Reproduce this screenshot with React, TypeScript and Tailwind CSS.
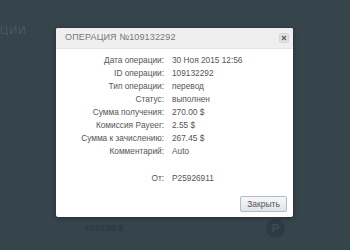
import React from "react";

const rows: [string, string][] = [
  ["Дата операции:", "30 Ноя 2015 12:56"],
  ["ID операции:", "109132292"],
  ["Тип операции:", "перевод"],
  ["Статус:", "выполнен"],
  ["Сумма получения:", "270.00 $"],
  ["Комиссия Payeer:", "2.55 $"],
  ["Сумма к зачислению:", "267.45 $"],
  ["Комментарий:", "Auto"],
];

export default function App() {
  return (
    <div
      className="relative w-[350px] h-[250px] overflow-hidden bg-[#36444b]"
      style={{ fontFamily: '"Liberation Sans", Arial, sans-serif' }}
    >
      {/* background page (dimmed) */}
      <div className="flex flex-col h-full">
        <div className="h-[24px]" />
        <div className="text-[11px] leading-[12px] tracking-[1px] text-[#4b5960]">ЦИИ</div>
        <div className="flex-1" />
        <div className="flex items-center h-[22px] mb-[11px] pl-[85px] pr-[65px]">
          <span className="text-[8.5px] text-[#2b383e] font-bold">+270.00 $</span>
          <div className="flex-1" />
          <div className="w-[19px] h-[19px] rounded-full bg-[#2d3b42] flex items-center justify-center text-[11px] font-bold text-[#3e4d55]">P</div>
        </div>
      </div>

      {/* modal */}
      <div className="absolute left-[56px] top-[28px] w-[237px] h-[189px] bg-white rounded-[2px] shadow-[0_1px_4px_rgba(0,0,0,0.35)] flex flex-col overflow-hidden">
        <div className="h-[21px] bg-[#efefef] border-b border-[#e4e4e4] flex items-center pl-[9px] pr-[4px]">
          <span className="text-[9px] tracking-[0.15px] text-[#777]">ОПЕРАЦИЯ №109132292</span>
          <div className="flex-1" />
          <div className="w-[10px] h-[10px] rounded-[2px] bg-[#e2e2e2] border border-[#d6d6d6] flex items-center justify-center">
            <svg width="6" height="6" viewBox="0 0 6 6">
              <path d="M1 1L5 5M5 1L1 5" stroke="#666" strokeWidth="1.4" />
            </svg>
          </div>
        </div>
        <div className="pt-[5px] grid grid-cols-[108px_1fr] gap-x-[8px] text-[8.3px] leading-[13px] text-[#555]">
          {rows.map(([l, v]) => (
            <React.Fragment key={l}>
              <div className="text-right">{l}</div>
              <div>{v}</div>
            </React.Fragment>
          ))}
          <div className="h-[14px]" />
          <div />
          <div className="text-right">От:</div>
          <div>P25926911</div>
        </div>
        <div className="flex-1" />
        <div className="flex justify-end pr-[6px] pb-[5px]">
          <button className="h-[16px] w-[47px] rounded-[2px] border border-[#a9bcd6] bg-gradient-to-b from-[#f7f7f7] to-[#e3e3e3] text-[8.5px] text-[#555] leading-none">
            Закрыть
          </button>
        </div>
      </div>
    </div>
  );
}
